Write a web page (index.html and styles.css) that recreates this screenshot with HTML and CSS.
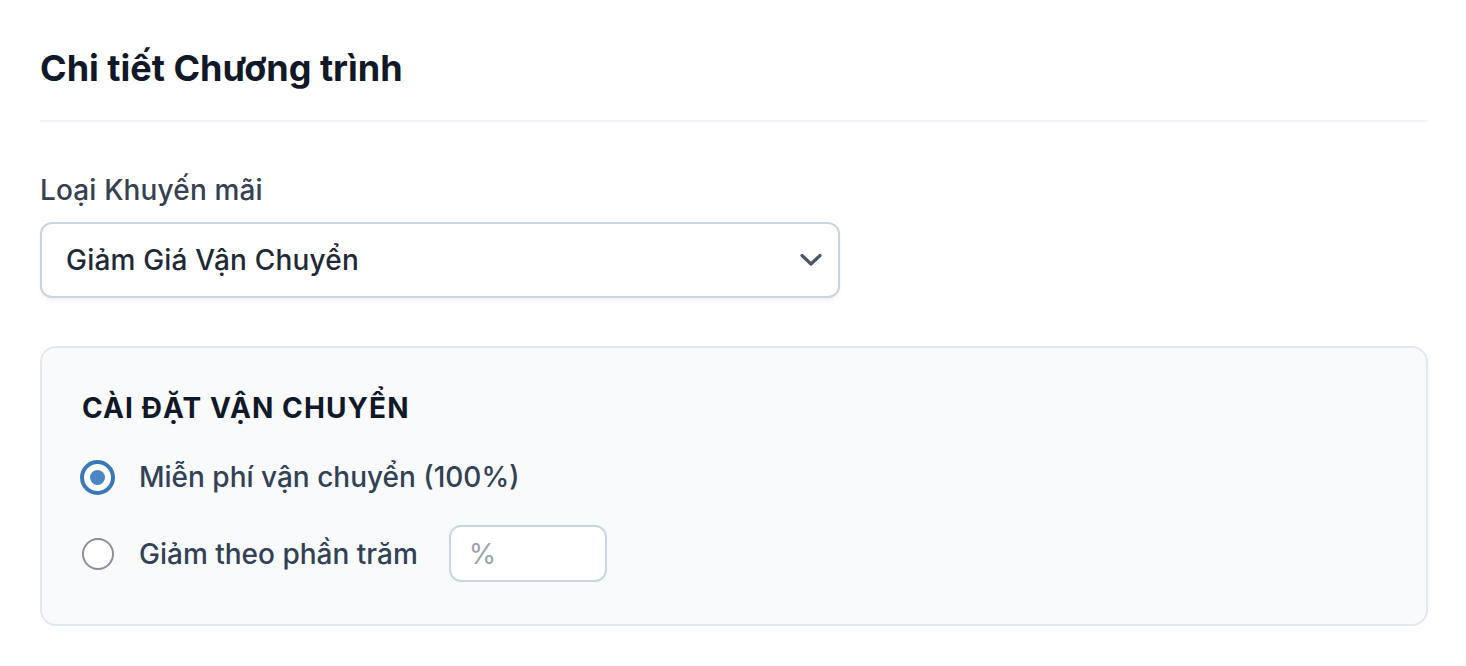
FILE: index.html
```html
<!DOCTYPE html>
<html lang="vi">
<head>
<meta charset="utf-8">
<title>Chi tiết Chương trình</title>
<link rel="stylesheet" href="styles.css">
</head>
<body>
<main class="page">
  <h2 class="title">Chi tiết Chương trình</h2>

  <div class="field">
    <label class="field-label" for="promo-type">Loại Khuyến mãi</label>
    <div class="select">
      <span class="select-value">Giảm Giá Vận Chuyển</span>
      <svg class="chevron" width="22" height="14" viewBox="0 0 22 14" aria-hidden="true">
        <path d="M2 2.5 L11 11 L20 2.5" fill="none" stroke="#4b5563" stroke-width="3.2" stroke-linecap="round" stroke-linejoin="round"/>
      </svg>
    </div>
  </div>

  <section class="panel">
    <h3 class="panel-title">CÀI ĐẶT VẬN CHUYỂN</h3>
    <div class="options">
      <label class="option">
        <span class="radio radio-checked"><span class="radio-dot"></span></span>
        <span class="option-text">Miễn phí vận chuyển (100%)</span>
      </label>
      <label class="option">
        <span class="radio"></span>
        <span class="option-text">Giảm theo phần trăm</span>
        <span class="pct-input"><span class="placeholder">%</span></span>
      </label>
    </div>
  </section>
</main>
</body>
</html>
```

FILE: styles.css
```css
* { box-sizing: border-box; }

html, body {
  margin: 0;
  padding: 0;
  background: #ffffff;
}

body {
  font-family: Inter, "Noto Sans", "Liberation Sans", sans-serif;
  color: #111827;
}

.page {
  padding: 40px 38px 40px 40px;
}

.title {
  margin: 0;
  font-size: 36px;
  line-height: 56px;
  font-weight: 700;
  color: #111827;
  padding-bottom: 24px;
  border-bottom: 2px solid #f1f5f9;
}

.field {
  margin-top: 48px;
  display: flex;
  flex-direction: column;
}

.field-label {
  font-size: 28px;
  line-height: 40px;
  font-weight: 500;
  letter-spacing: 0.15px;
  color: #374151;
  margin-bottom: 12px;
}

.select {
  width: 800px;
  height: 76px;
  border: 2px solid #cbd5e1;
  border-radius: 12px;
  background: #ffffff;
  display: flex;
  align-items: center;
  justify-content: space-between;
  padding: 0 16px 0 24px;
  box-shadow: 0 2px 3px rgba(15, 23, 42, 0.06);
}

.select-value {
  font-size: 28px;
  line-height: 40px;
  font-weight: 500;
  letter-spacing: 0.2px;
  color: #1f2937;
}

.chevron {
  display: block;
}

.panel {
  margin-top: 48px;
  background: #f8fafc;
  border: 2px solid #e2e8f0;
  border-radius: 16px;
  padding: 40px 40px 42px 40px;
}

.panel-title {
  margin: 0 0 29px 0;
  font-size: 28px;
  line-height: 40px;
  font-weight: 700;
  letter-spacing: 1.1px;
  color: #111827;
}

.options {
  display: flex;
  flex-direction: column;
  gap: 28px;
}

.option {
  display: flex;
  align-items: center;
  min-height: 40px;
}

.radio {
  width: 32px;
  height: 32px;
  border-radius: 50%;
  border: 2px solid #8a8f98;
  background: #ffffff;
  flex: none;
  display: flex;
  align-items: center;
  justify-content: center;
}

.radio-checked {
  width: 35px;
  height: 35px;
  margin: 0 -1px 0 -2px;
  border: 4px solid #3b78ba;
}

.radio-dot {
  width: 15px;
  height: 15px;
  border-radius: 50%;
  background: #4a86c6;
}

.option-text {
  margin-left: 25px;
  font-size: 28px;
  line-height: 40px;
  font-weight: 500;
  color: #334155;
}

.pct-input {
  margin-left: 31px;
  width: 158px;
  height: 57px;
  border: 2px solid #cbd5e1;
  border-radius: 12px;
  background: #ffffff;
  display: flex;
  align-items: center;
  padding-left: 18px;
}

.placeholder {
  font-size: 28px;
  line-height: 40px;
  color: #9ca3af;
}
```
